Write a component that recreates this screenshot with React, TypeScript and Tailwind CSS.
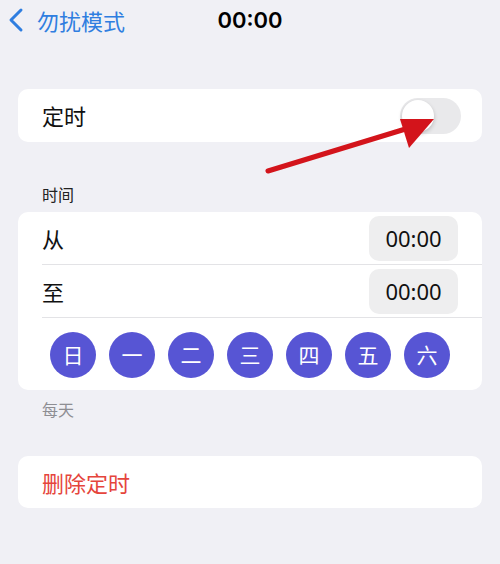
import React from 'react';

const days = ['日', '一', '二', '三', '四', '五', '六'];

const cjk = { fontFamily: '"Noto Sans CJK SC", "Noto Sans", sans-serif' };

function TimePill({ value }: { value: string }) {
  return (
    <div className="w-[89px] h-[45px] rounded-[10px] bg-[#eeeeef] flex items-center justify-center text-[22px] text-[#111]" style={{ fontFamily: '"Noto Sans", Inter, sans-serif' }}>
      {value}
    </div>
  );
}

export default function App() {
  return (
    <div className="relative w-[500px] h-[564px] bg-[#f0f0f5] overflow-hidden" style={cjk}>
      {/* nav */}
      <div className="relative h-[40px] flex items-center">
        <div className="flex items-center pl-[7px] text-[#2f7ee0]">
          <svg width="18" height="26" viewBox="0 0 18 26" fill="none">
            <path d="M14 3L4 13l10 10" stroke="currentColor" strokeWidth="3" strokeLinecap="round" strokeLinejoin="round" />
          </svg>
          <span className="ml-[12px] text-[22px] leading-none">勿扰模式</span>
        </div>
        <div className="absolute left-0 right-0 top-0 h-[40px] flex items-center justify-center pointer-events-none">
          <span className="text-[22px] font-semibold text-black leading-none" style={{ fontFamily: 'Inter, "Noto Sans", sans-serif' }}>00:00</span>
        </div>
      </div>

      <div className="px-[18px]">
        {/* 定时 */}
        <div className="mt-[49px] h-[53px] bg-white rounded-[10px] flex items-center justify-between pl-[24px] pr-[21px]">
          <span className="text-[22px] text-[#111]">定时</span>
          <div className="w-[61px] h-[36px] rounded-full bg-[#e9e9eb] p-[2px] flex items-center">
            <div className="w-[32px] h-[32px] rounded-full bg-white shadow-[0_2px_4px_rgba(0,0,0,0.2)]" />
          </div>
        </div>

        <div className="mt-[42px] pl-[24px] text-[16px] leading-[20px] text-[#222]">时间</div>

        {/* 时间 card */}
        <div className="mt-[8px] bg-white rounded-[10px] overflow-hidden">
          <div className="h-[52px] flex items-center justify-between pl-[24px] pr-[24px]">
            <span className="text-[22px] text-[#111]">从</span>
            <TimePill value="00:00" />
          </div>
          <div className="ml-[24px] h-px bg-[#e3e3e6]" />
          <div className="h-[52px] flex items-center justify-between pl-[24px] pr-[24px]">
            <span className="text-[22px] text-[#111]">至</span>
            <TimePill value="00:00" />
          </div>
          <div className="ml-[24px] h-px bg-[#e3e3e6]" />
          <div className="flex items-center pl-[32px] gap-[13px] pt-[14px] pb-[12px]">
            {days.map((d) => (
              <div key={d} className="w-[46px] h-[46px] rounded-full bg-[#5755d4] flex items-center justify-center text-white text-[21px]">
                {d}
              </div>
            ))}
          </div>
        </div>

        <div className="mt-[9px] pl-[24px] text-[16px] leading-[20px] text-[#8e8e93]">每天</div>

        {/* 删除定时 */}
        <div className="mt-[37px] h-[52px] bg-white rounded-[10px] flex items-center pl-[24px]">
          <span className="text-[22px] text-[#e5453c]">删除定时</span>
        </div>
      </div>

      {/* red annotation arrow */}
      <svg className="absolute left-0 top-0 pointer-events-none" width="500" height="564" viewBox="0 0 500 564">
        <line x1="268" y1="171" x2="412" y2="127" stroke="#d3141b" strokeWidth="5" strokeLinecap="round" />
        <polygon points="434,119 400,119 409,148" fill="#d3141b" />
      </svg>
    </div>
  );
}
